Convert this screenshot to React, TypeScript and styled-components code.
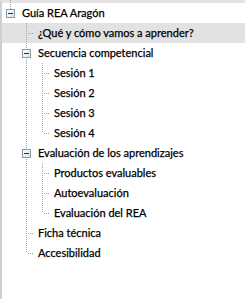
import React from "react";
import styled, { createGlobalStyle } from "styled-components";

const Global = createGlobalStyle`
  html, body { margin: 0; padding: 0; background: #fff; }
  body { width: 245px; height: 299px; overflow: hidden; }
`;

type Node = { label: string; children?: Node[]; selected?: boolean };

const tree: Node[] = [
  {
    label: "Guía REA Aragón",
    children: [
      { label: "¿Qué y cómo vamos a aprender?", selected: true },
      {
        label: "Secuencia competencial",
        children: [
          { label: "Sesión 1" },
          { label: "Sesión 2" },
          { label: "Sesión 3" },
          { label: "Sesión 4" },
        ],
      },
      {
        label: "Evaluación de los aprendizajes",
        children: [
          { label: "Productos evaluables" },
          { label: "Autoevaluación" },
          { label: "Evaluación del REA" },
        ],
      },
      { label: "Ficha técnica" },
      { label: "Accesibilidad" },
    ],
  },
];

const Panel = styled.div`
  box-sizing: border-box;
  width: 245px;
  height: 299px;
  display: flex;
  flex-direction: column;
  border-top: 3px solid #e3e3e3;
  border-left: 2px solid #cfcfcf;
  background: #fff;
  font-family: Lato, "DejaVu Sans", sans-serif;
  font-size: 11px;
  color: #000;
`;

const Row = styled.div<{ $selected?: boolean }>`
  display: flex;
  align-items: center;
  height: 20px;
  flex: none;
  background: ${(p) => (p.$selected ? "#e2e2e2" : "transparent")};
`;

const Cell = styled.svg`
  flex: none;
  width: 16px;
  height: 20px;
  overflow: visible;
  display: block;
`;

const Label = styled.span`
  padding-left: 4px;
  white-space: nowrap;
  line-height: 20px;
  -webkit-text-stroke: 0.25px #000;
`;

const DOT = { stroke: "#a3a3a3", strokeWidth: 1, strokeDasharray: "1 1", shapeRendering: "crispEdges" as const };

function Guide({ on }: { on: boolean }) {
  return (
    <Cell viewBox="0 0 16 20">
      {on && <line x1={8.5} y1={0} x2={8.5} y2={20} {...DOT} />}
    </Cell>
  );
}

function Connector({ first, last, expandable }: { first: boolean; last: boolean; expandable: boolean }) {
  return (
    <Cell viewBox="0 0 16 20">
      <line x1={8.5} y1={first ? -3 : 0} x2={8.5} y2={last ? 10 : 20} {...DOT} />
      {!expandable && <line x1={10} y1={10.5} x2={16} y2={10.5} {...DOT} />}
      {expandable && (
        <>
          <defs>
            <linearGradient id="bx" x1="0" y1="0" x2="1" y2="1">
              <stop offset="0" stopColor="#ffffff" />
              <stop offset="1" stopColor="#e4e4dc" />
            </linearGradient>
          </defs>
          <rect x={4.5} y={6.5} width={8} height={8} fill="url(#bx)" stroke="#7f9db9" strokeWidth={1} shapeRendering="crispEdges" />
          <rect x={6} y={10} width={5} height={1} fill="#1c2f5a" shapeRendering="crispEdges" />
        </>
      )}
    </Cell>
  );
}

type Flat = { node: Node; guides: boolean[]; last: boolean; first: boolean };

function flatten(nodes: Node[], guides: boolean[], out: Flat[]) {
  nodes.forEach((n, i) => {
    const last = i === nodes.length - 1;
    out.push({ node: n, guides, last, first: out.length === 0 });
    if (n.children) flatten(n.children, [...guides, !last], out);
  });
  return out;
}

export default function App() {
  const rows = flatten(tree, [], []);
  return (
    <>
      <Global />
      <Panel>
        {rows.map((r, i) => (
          <Row key={i} $selected={r.node.selected}>
            {r.guides.map((g, j) => (
              <Guide key={j} on={g} />
            ))}
            <Connector first={r.first} last={r.last} expandable={!!r.node.children} />
            <Label>{r.node.label}</Label>
          </Row>
        ))}
      </Panel>
    </>
  );
}
